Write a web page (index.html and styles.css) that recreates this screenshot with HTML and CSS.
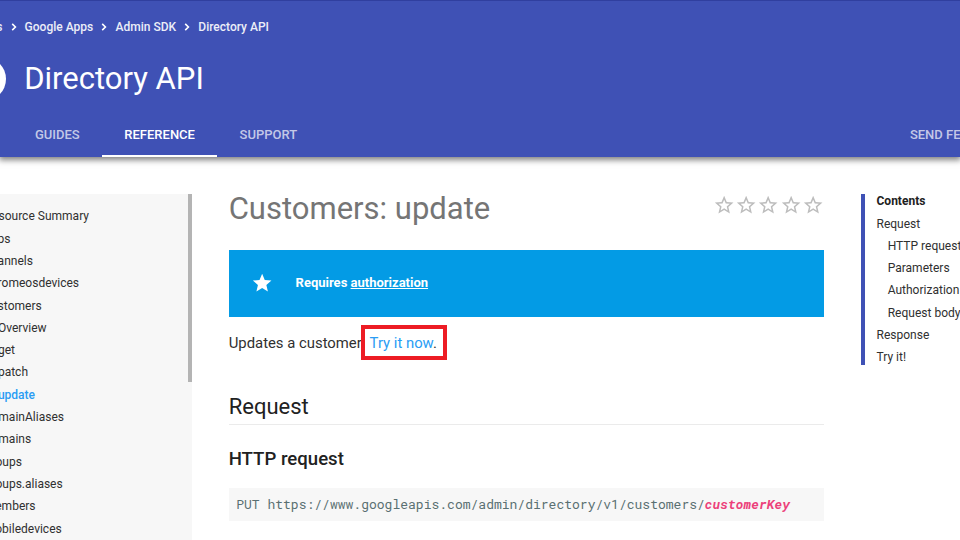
FILE: index.html
```html
<!DOCTYPE html>
<html lang="en">
<head>
<meta charset="utf-8">
<title>Customers: update - Directory API</title>
<link rel="stylesheet" href="styles.css">
</head>
<body>
<svg class="defs" aria-hidden="true">
  <symbol id="chevron" viewBox="0 0 6 8"><path d="M1.2.9 4.4 4 1.2 7.1"/></symbol>
  <symbol id="star" viewBox="0 0 24 24"><path d="M12 17.27 18.18 21l-1.64-7.03L22 9.24l-7.19-.61L12 2 9.19 8.63 2 9.24l5.46 4.73L5.82 21z"/></symbol>
  <symbol id="star-outline" viewBox="0 0 24 24"><path d="M22 9.24l-7.19-.62L12 2 9.19 8.63 2 9.24l5.46 4.73L5.82 21 12 17.27 18.18 21l-1.63-7.03L22 9.24zM12 15.4l-3.76 2.27 1-4.28-3.32-2.88 4.38-.38L12 6.1l1.71 4.04 4.38.38-3.32 2.88 1 4.28L12 15.4z"/></symbol>
</svg>
<header class="top">
  <nav class="crumbs">
    <a>Products</a><svg><use href="#chevron"/></svg>
    <a>Google Apps</a><svg><use href="#chevron"/></svg>
    <a>Admin SDK</a><svg><use href="#chevron"/></svg>
    <a>Directory API</a>
  </nav>
  <div class="product"><span class="logo"></span><span class="name">Directory API</span></div>
  <nav class="tabs">
    <a>GUIDES</a><a class="active">REFERENCE</a><a>SUPPORT</a><a class="feedback">SEND FEEDBACK</a>
  </nav>
</header>
<div class="page">
  <aside class="side">
    <ul>
      <li>Resource Summary</li>
      <li>asps</li>
      <li>channels</li>
      <li>chromeosdevices</li>
      <li>customers</li>
      <li class="sub">Overview</li>
      <li class="sub">get</li>
      <li class="sub">patch</li>
      <li class="sub current">update</li>
      <li>domainAliases</li>
      <li>domains</li>
      <li>groups</li>
      <li>groups.aliases</li>
      <li>members</li>
      <li>mobiledevices</li>
    </ul>
    <div class="thumb"></div>
  </aside>
  <main>
    <div class="title">
      <h1>Customers: update</h1>
      <div class="rating">
        <svg><use href="#star-outline"/></svg><svg><use href="#star-outline"/></svg><svg><use href="#star-outline"/></svg><svg><use href="#star-outline"/></svg><svg><use href="#star-outline"/></svg>
      </div>
    </div>
    <div class="notice"><svg><use href="#star"/></svg><b>Requires <a>authorization</a></b></div>
    <p>Updates a customer<span class="mark"><a>Try it now</a>.</span></p>
    <h2>Request</h2>
    <h3>HTTP request</h3>
    <pre>PUT https://www.googleapis.com/admin/directory/v1/customers/<var>customerKey</var></pre>
  </main>
  <aside class="toc">
    <ul>
      <li class="head">Contents</li>
      <li>Request</li>
      <li class="sub">HTTP request</li>
      <li class="sub">Parameters</li>
      <li class="sub">Authorization</li>
      <li class="sub">Request body</li>
      <li>Response</li>
      <li>Try it!</li>
    </ul>
  </aside>
</div>
</body>
</html>
```
FILE: styles.css
```css
* { box-sizing: border-box; }
html, body { margin: 0; height: 540px; overflow: hidden; }
body {
  width: 960px;
  background: #fff;
  color: #212121;
  font-family: Roboto, sans-serif;
  display: flex;
  flex-direction: column;
}
ul { list-style: none; margin: 0; padding: 0; }
.defs { display: none; }

.top {
  flex: none;
  height: 157px;
  background: #3f51b5;
  border-top: 1px solid #303f9f;
  color: #fff;
  box-shadow: 0 2px 6px 1px rgba(0, 0, 0, .5);
  display: flex;
  flex-direction: column;
}
.crumbs {
  height: 20px;
  margin: 16px 0 0 -47.6px;
  display: flex;
  align-items: center;
  font-size: 12.03px;
  font-weight: 500;
  color: #eceef8;
  white-space: nowrap;
}
.crumbs a:first-child { width: 50px; text-align: right; }
.crumbs svg {
  width: 6px;
  height: 8px;
  margin: 0 8.1px;
  fill: none;
  stroke: #fff;
  stroke-width: 1.6;
}
.product { display: flex; align-items: center; height: 44px; margin-top: 20px; }
.logo { width: 44.6px; height: 44.6px; border-radius: 50%; background: #fff; margin: 0 18.6px 0 -39px; }
.name { font-size: 31px; line-height: 44px; }
.tabs {
  display: flex;
  margin: auto 0 0 12.7px;
  height: 46px;
  font-size: 13px;
  font-weight: 500;
  color: rgba(255, 255, 255, .7);
  white-space: nowrap;
}
.tabs a { padding: 0 22.3px; line-height: 47px; }
.tabs .active { color: #fff; border-bottom: 2px solid #fff; }
.tabs .feedback { margin: 0 -70px 0 auto; width: 142.4px; }

.page { flex: 1; min-height: 0; display: flex; padding-top: 37px; }
.side {
  flex: none;
  width: 191.5px;
  background: #f7f7f7;
  display: flex;
  justify-content: space-between;
  overflow: hidden;
}
.side ul { margin: 11.4px 0 0 -15.3px; }
.side li, .toc li { height: 22.3px; line-height: 22.3px; font-size: 12.03px; white-space: nowrap; color: #303030; }
.side .sub { padding-left: 13.2px; }
.toc .sub { padding-left: 11.2px; }
.side .current { color: #2a9df4; font-weight: 500; }
.thumb { width: 4px; height: 188px; background: #b4b4b4; }

main { flex: none; width: 595.5px; margin-left: 37.2px; }
.title { display: flex; justify-content: space-between; height: 56px; }
h1 { margin: -1px 0 0; font-size: 31px; line-height: 32px; font-weight: 400; color: #757575; }
.rating { display: flex; }
.rating svg { width: 22.3px; height: 22.3px; fill: #bdbdbd; }
.notice {
  height: 67px;
  background: #039be5;
  color: #fff;
  display: flex;
  align-items: center;
  padding-left: 22.3px;
  font-size: 13px;
}
.notice svg { width: 22.3px; height: 22.3px; margin-right: 22.3px; fill: #fff; }
.notice b { margin-top: -2px; }
.notice a { text-decoration: underline; }
p { margin: 8px 0 0; height: 35px; display: flex; align-items: center; font-size: 14.87px; color: #303030; }
.mark { width: 86px; height: 35px; margin-left: -.4px; border: 4.5px solid #ed1c24; padding-left: 4.2px; line-height: 28px; white-space: nowrap; }
.mark a { color: #2a9df4; }
h2 { margin: 30px 0 0; height: 35px; line-height: 33px; font-size: 22px; font-weight: 400; border-bottom: 1px solid #ebebeb; }
h3 { margin: 21px 0 0; line-height: 26px; font-size: 18.6px; font-weight: 500; }
pre {
  margin: 16px 0 0;
  height: 33px;
  line-height: 33px;
  padding-left: 7.5px;
  background: #f7f7f7;
  color: #5a7072;
  font-family: "Roboto Mono", "DejaVu Sans Mono", monospace;
  font-size: 13.02px;
}
var { color: #ec407a; font-weight: 700; font-style: italic; letter-spacing: .1px; }

.toc { flex: none; align-self: flex-start; margin-left: 37.3px; width: 120px; height: 171px; border-left: 4px solid #3f51b5; padding: 0 0 0 11px; margin-right: -30px; }
.toc ul { margin-top: -3.8px; }
.toc .head { font-weight: 700; color: #212121; }
```
